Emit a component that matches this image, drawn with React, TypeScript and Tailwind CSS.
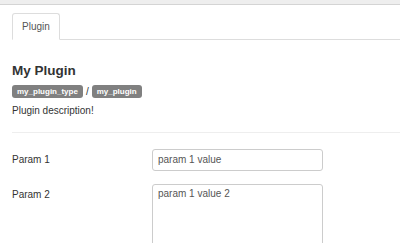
export default function App() {
  return (
    <div className="w-[400px] h-[243px] overflow-hidden bg-white text-[#333]" style={{ fontFamily: '"Liberation Sans", Arial, sans-serif' }}>
      <div className="h-[5px] bg-[#eeeeee] border-b border-[#d4d4d4]" />
      <div className="pt-[8px] pl-3">
        <ul className="flex border-b border-[#dddddd]">
          <li className="-mb-px h-[27px] px-[9px] border border-[#dddddd] border-b-white rounded-t-[3px] bg-white text-[10px] text-[#555] flex items-center">
            Plugin
          </li>
        </ul>
      </div>
      <div className="pl-3">
        <h4 className="mt-[23px] text-[13.5px] leading-[16px] font-bold text-[#333]">My Plugin</h4>
        <div className="mt-[6px] flex items-center text-[10px] leading-[13px]">
          <span className="inline-block rounded-[3px] bg-[#808080] px-[5px] h-[13px] text-[8px] leading-[13px] font-bold text-white">my_plugin_type</span>
          <span className="mx-[3px]">/</span>
          <span className="inline-block rounded-[3px] bg-[#808080] px-[5px] h-[13px] text-[8px] leading-[13px] font-bold text-white">my_plugin</span>
        </div>
        <p className="mt-[6px] text-[10px] leading-[14px]">Plugin description!</p>
        <div className="mt-[14px] border-t border-[#eeeeee]" />
        <div className="mt-[16px] grid grid-cols-[140px_171px] gap-y-[13px]">
          <label className="text-[10px] leading-[14px] pt-[4px]">Param 1</label>
          <div className="h-[22px] border border-[#cccccc] rounded-[3px] px-[5px] text-[10px] leading-[20px] text-[#555]">param 1 value</div>
          <label className="text-[10px] leading-[14px] pt-[4px]">Param 2</label>
          <div className="h-[80px] border border-[#cccccc] rounded-[3px] px-[5px] pt-[2px] text-[10px] leading-[14px] text-[#555]">param 1 value 2</div>
        </div>
      </div>
    </div>
  );
}
